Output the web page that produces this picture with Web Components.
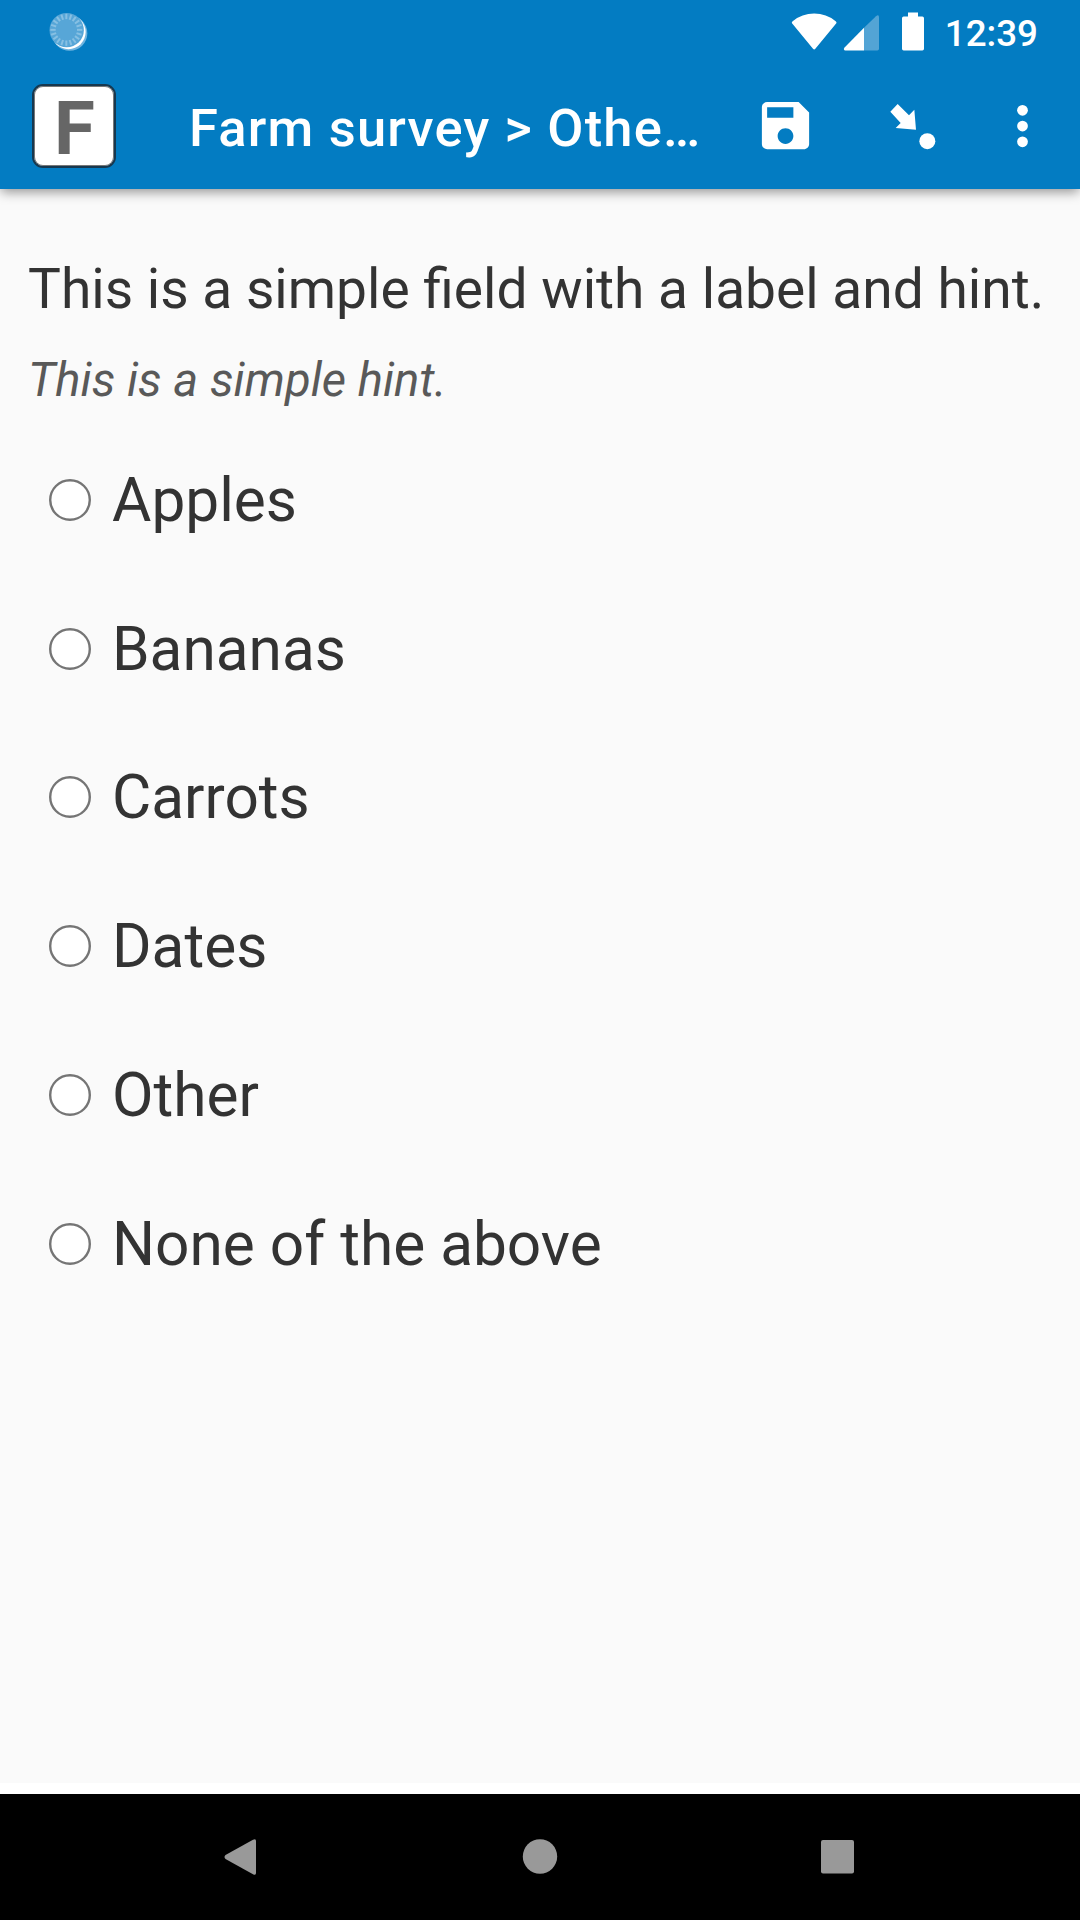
<!DOCTYPE html>
<html lang="en">
<head>
<meta charset="utf-8">
<title>Farm survey</title>
<style>
  html, body { margin: 0; padding: 0; }
  body { font-family: Roboto, "Liberation Sans", sans-serif; background: #fff; }
</style>
</head>
<body>
<phone-screen>
  <status-bar slot="top" time="12:39"></status-bar>
  <app-bar slot="top" initial="F">Farm survey &gt; Othe…</app-bar>
  <survey-question>
    <span slot="label">This is a simple field with a label and hint.</span>
    <span slot="hint">This is a simple hint.</span>
    <radio-option>Apples</radio-option>
    <radio-option>Bananas</radio-option>
    <radio-option>Carrots</radio-option>
    <radio-option>Dates</radio-option>
    <radio-option>Other</radio-option>
    <radio-option>None of the above</radio-option>
  </survey-question>
  <nav-bar slot="bottom"></nav-bar>
</phone-screen>
<script>
  function define(name, html) {
    customElements.define(name, class extends HTMLElement {
      constructor() {
        super();
        this.attachShadow({ mode: 'open' }).innerHTML = html;
      }
      connectedCallback() {
        this.shadowRoot.querySelectorAll('[data-attr]').forEach(n => {
          n.textContent = this.getAttribute(n.dataset.attr);
        });
      }
    });
  }

  define('phone-screen', `
    <style>
      :host { display: flex; flex-direction: column; width: 1080px; height: 1920px; overflow: hidden; background: #fff; }
      header { height: 189px; flex: none; background: #037cc2; position: relative; z-index: 1; box-shadow: 0 4px 11px -1px rgba(0,0,0,.42); }
      main { height: 1594px; flex: none; background: #fafafa; }
      footer { margin-top: auto; }
    </style>
    <header><slot name="top"></slot></header>
    <main><slot></slot></main>
    <footer><slot name="bottom"></slot></footer>`);

  const ticks = Array.from({ length: 20 }, (_, i) =>
    `<path d="M0-48V-32" transform="translate(199 88) rotate(${i * 18})"/>`).join('');

  define('status-bar', `
    <style>
      :host { display: flex; align-items: center; height: 63px; box-sizing: border-box; padding: 0 42px 0 46px; color: #fff; }
      svg { display: block; flex: none; }
      .right { margin-left: auto; display: flex; align-items: center; }
      .signal { margin-left: 4px; }
      .battery { margin-left: 20px; }
      time { font-size: 36.75px; font-weight: 500; line-height: 43px; margin-left: 19px; padding-top: 4px; }
    </style>
    <svg width="44" height="44" viewBox="138 28.5 132 132">
      <circle cx="209" cy="98" r="53" fill="#6fb4df"/>
      <circle cx="205.500" cy="94.500" r="51.500" fill="#fff"/>
      <circle cx="200" cy="89" r="51.500" fill="#57a6d7"/>
      <g stroke="#87c0e3" stroke-width="6">${ticks}</g>
    </svg>
    <div class="right">
      <svg width="48" height="42" viewBox="210 31.5 144 126"><path fill="#fff" d="M216 68Q214 65 218 62Q246 39 282.500 39Q319 39 347 62Q351 65 349 68L286 145Q282.500 149 279 145Z"/></svg>
      <svg class="signal" width="38" height="42" viewBox="366 31.500 114 126">
        <path fill="#53a4d5" d="M432 82L468 47Q477 41 477 50V145Q477 150 472 150H432Z"/>
        <path fill="#fff" d="M432 82V150H376Q369 149 373 142Z"/></svg>
      <svg class="battery" width="26" height="42" viewBox="540 31.500 78 126"><path fill="#fff" d="M564 36H594V48H607Q612 48 612 53V145Q612 150 607 150H551Q546 150 546 145V53Q546 48 551 48H564Z"/></svg>
      <time data-attr="time"></time>
    </div>`);

  define('app-bar', `
    <style>
      :host { display: flex; align-items: center; height: 126px; box-sizing: border-box; padding: 0 26px 0 32px; color: #fff; }
      .logo { width: 84px; height: 84px; box-sizing: border-box; flex: none; border: 2px solid #17384f; border-radius: 11px; background: #fff; box-shadow: inset 0 0 0 1px #777; display: flex; align-items: center; justify-content: center; color: #666; font-size: 74.5px; font-weight: 700; line-height: 80px; }
      .logo span { padding: 5px 0 0 1px; }
      h1 { margin: 0 0 0 73px; padding-top: 3px; flex: 1; font-size: 52.5px; font-weight: 500; line-height: 62px; letter-spacing: 1.2px; white-space: nowrap; }
      .actions { display: flex; align-items: center; padding-bottom: 1px; }
      svg { display: block; fill: #fff; }
      .goto { margin-left: 65px; }
      .more { margin-left: 46px; }
    </style>
    <div class="logo"><span data-attr="initial"></span></div>
    <h1><slot></slot></h1>
    <div class="actions">
      <svg width="63" height="63" viewBox="0 0 24 24"><path d="M17 3H5c-1.11 0-2 .9-2 2v14c0 1.1.89 2 2 2h14c1.1 0 2-.9 2-2V7l-4-4zm-5 16c-1.66 0-3-1.34-3-3s1.34-3 3-3 3 1.34 3 3-1.34 3-3 3zm3-10H5V5h10v4z"/></svg>
      <svg class="goto" width="63" height="63" viewBox="486 282 189 189"><path d="M533 312L511 335L542 369L527 384L588 389L583 329L567 346Z"/><circle cx="622" cy="423.500" r="24"/></svg>
      <svg class="more" width="63" height="63" viewBox="0 0 24 24"><circle cx="12" cy="6.200" r="2.050"/><circle cx="12" cy="12.200" r="2.050"/><circle cx="12" cy="18.200" r="2.050"/></svg>
    </div>`);

  define('survey-question', `
    <style>
      :host { display: flex; flex-direction: column; padding: 69px 28px 0; color: #333; }
      .label { font-size: 55.125px; line-height: 62px; white-space: nowrap; }
      .hint { margin-top: 33px; font-size: 47.25px; line-height: 54px; font-style: italic; color: #595959; }
      .options { margin: 19px 0 0 21px; }
    </style>
    <div class="label"><slot name="label"></slot></div>
    <div class="hint"><slot name="hint"></slot></div>
    <div class="options"><slot></slot></div>`);

  define('radio-option', `
    <style>
      :host { display: flex; align-items: center; gap: 21px; height: 148.75px; font-size: 60.375px; line-height: 72px; }
      svg { display: block; flex: none; margin-bottom: 1px; }
      span { padding-top: 1px; }
    </style>
    <svg width="42" height="42" viewBox="0 0 42 42"><circle cx="21" cy="21" r="19.800" fill="#fff" stroke="#757575" stroke-width="2.400"/></svg>
    <span><slot></slot></span>`);

  define('nav-bar', `
    <style>
      :host { display: grid; grid-template-columns: repeat(3, 298.5px); justify-content: center; align-items: center; justify-items: center; height: 126px; box-sizing: border-box; padding-right: 1px; background: #000; }
      svg { display: block; fill: #999; }
    </style>
    <svg width="42" height="42" viewBox="0 0 42 42"><path d="M33 3.800Q36 2.300 36 5V37Q36 39.700 33 38.200L5.500 23Q3.500 21 5.500 19Z"/></svg>
    <svg width="42" height="42" viewBox="0 0 42 42"><circle cx="21" cy="20.500" r="17.200"/></svg>
    <svg width="42" height="42" viewBox="0 0 42 42"><rect x="4" y="4" width="33" height="33.500" rx="2"/></svg>`);
</script>
</body>
</html>
